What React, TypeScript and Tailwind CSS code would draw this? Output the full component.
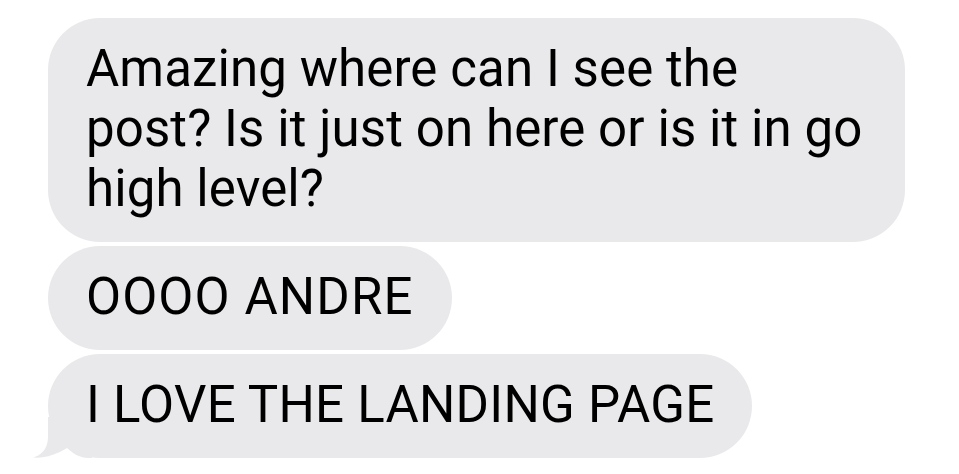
export default function App() {
  return (
    <div
      className="h-[474px] w-[959px] overflow-hidden bg-white pl-[48px] pt-[18px] text-black"
      style={{ fontFamily: 'Roboto, "Liberation Sans", Arial, sans-serif' }}
    >
      <div className="flex flex-col items-start gap-[4px]">
        <div className="w-[857px] rounded-[52px] bg-[#e9e9eb] pb-[23px] pl-[38px] pr-[38px] pt-[21px] text-[51px] leading-[60px] tracking-[0.1px]">
          Amazing where can I see the
          <br />
          post? Is it just on here or is it in go
          <br />
          high level?
        </div>

        <div className="w-fit rounded-[52px] bg-[#e9e9eb] pb-[23px] pl-[38px] pr-[38px] pt-[21px] text-[51px] leading-[60px] tracking-[1.1px]">
          OOOO ANDRE
        </div>

        {/* last message gets the tail */}
        <div className="relative w-fit rounded-[52px] bg-[#e9e9eb] pb-[23px] pl-[38px] pr-[38px] pt-[21px] text-[51px] leading-[60px] tracking-[0.25px]">
          <svg
            className="absolute bottom-0 left-[-16px]"
            width="60"
            height="41"
            viewBox="0 0 60 41"
          >
            <path
              d="M16 0 L16 20 C16 32 9 38.5 1 40.5 C12 41.5 25 37.5 35 31 C41 36.5 47 40.5 56 41 L60 41 L60 0 Z"
              fill="#e9e9eb"
            />
          </svg>
          <span className="relative">I LOVE THE LANDING PAGE</span>
        </div>
      </div>
    </div>
  );
}
